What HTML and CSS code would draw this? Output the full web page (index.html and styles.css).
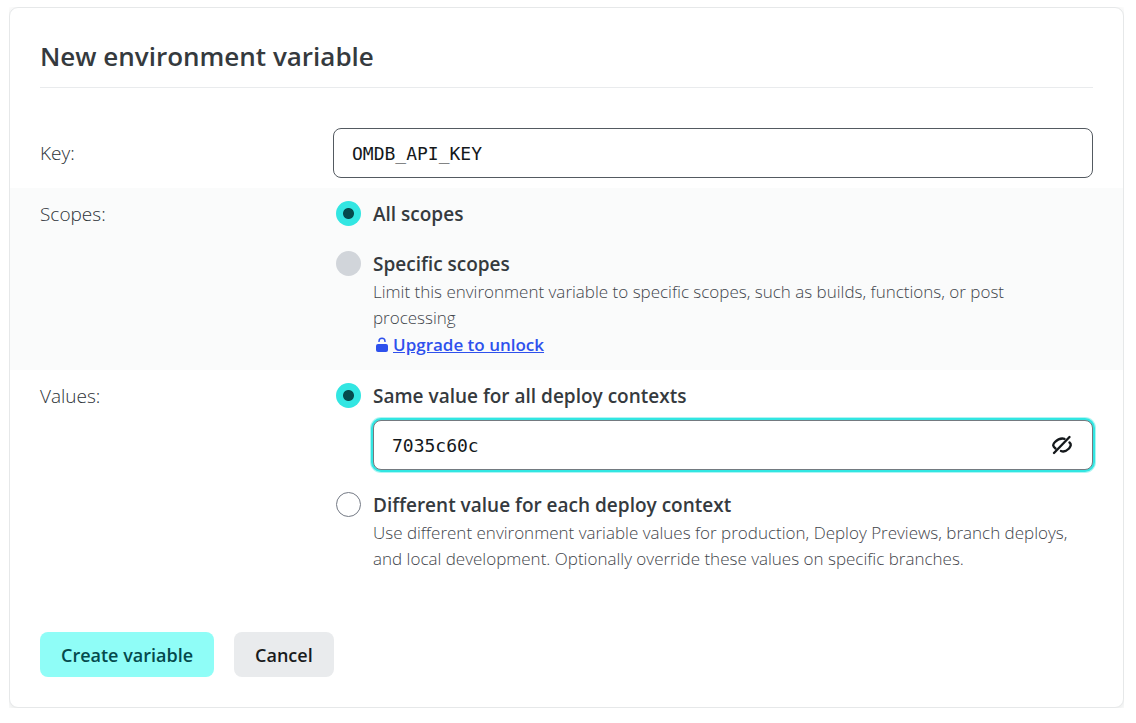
FILE: index.html
```html
<!DOCTYPE html>
<html lang="en">
<head>
  <meta charset="utf-8">
  <meta name="viewport" content="width=device-width, initial-scale=1.0">
  <title>New environment variable</title>
  <link rel="stylesheet" href="styles.css">
</head>
<body>
  <main class="card">
    <h1>New environment variable</h1>
    <form>
      <div class="row row-key">
        <label for="key">Key:</label>
        <input class="text-input" id="key" type="text" value="OMDB_API_KEY">
      </div>

      <div class="row row-shaded" role="radiogroup" aria-labelledby="scopes-label">
        <span class="row-label" id="scopes-label">Scopes:</span>
        <div class="options">
          <div class="option">
            <input type="radio" id="scope-all" name="scope" checked>
            <div class="option-body">
              <label class="option-title" for="scope-all">All scopes</label>
            </div>
          </div>
          <div class="option">
            <input type="radio" id="scope-specific" name="scope" disabled>
            <div class="option-body">
              <label class="option-title" for="scope-specific">Specific scopes</label>
              <p class="help">Limit this environment variable to specific scopes, such as builds, functions, or post processing</p>
              <div class="upgrade">
                <svg class="lock" width="14" height="16" viewBox="0 0 14 16" aria-hidden="true">
                  <path d="M4 5V4.300a3 3 0 0 1 6 0V5" fill="none" stroke="currentColor" stroke-width="1.400"/>
                  <rect x="1" y="7" width="12" height="8" rx="2" fill="currentColor"/>
                </svg>
                <a href="#">Upgrade to unlock</a>
              </div>
            </div>
          </div>
        </div>
      </div>

      <div class="row" role="radiogroup" aria-labelledby="values-label">
        <span class="row-label" id="values-label">Values:</span>
        <div class="options">
          <div class="option">
            <input type="radio" id="value-same" name="value" checked>
            <div class="option-body">
              <label class="option-title" for="value-same">Same value for all deploy contexts</label>
              <div class="secret">
                <input class="text-input focused" type="text" value="7035c60c" aria-label="Value">
                <button class="toggle" type="button" aria-label="Hide value">
                  <svg width="22" height="22" viewBox="0 0 22 22" fill="none" stroke="currentColor" stroke-width="2.4" stroke-linecap="round" aria-hidden="true">
                    <path d="M4.500 14.500C1.500 12 1.500 10.500 4 8C7 5 10 4 13.500 4.800"/>
                    <path d="M18.500 8.500C20.500 10 20 12 18 14.500C15.500 17 12.500 18 10 17"/>
                    <path d="M3 19L18.500 3"/>
                  </svg>
                </button>
              </div>
            </div>
          </div>
          <div class="option">
            <input type="radio" id="value-different" name="value">
            <div class="option-body">
              <label class="option-title" for="value-different">Different value for each deploy context</label>
              <p class="help">Use different environment variable values for production, Deploy Previews, branch deploys, and local development. Optionally override these values on specific branches.</p>
            </div>
          </div>
        </div>
      </div>

      <div class="actions">
        <button class="btn btn-primary" type="submit">Create variable</button>
        <button class="btn" type="button">Cancel</button>
      </div>
    </form>
  </main>
</body>
</html>
```

FILE: styles.css
```css
* {
  box-sizing: border-box;
}

body {
  margin: 7px 12px 14px 9px;
  background: #fff;
  color: #353a3e;
  font-family: "Open Sans", "Noto Sans", sans-serif;
  font-size: 19px;
  line-height: 30px;
}

.card {
  padding-bottom: 30px;
  border: 1px solid #e6e8e9;
  border-radius: 9px;
  background: #fff;
  box-shadow: 0 2px 10px rgba(14, 30, 37, 0.12);
}

h1 {
  margin: 0 30px;
  padding: 28px 0 11px;
  border-bottom: 1px solid #e9ebed;
  font-size: 26px;
  font-weight: 600;
  line-height: 40px;
}

.row {
  display: grid;
  grid-template-columns: 293px 1fr;
  padding: 11px 30px;
}

.row-key {
  align-items: center;
  padding: 40px 30px 10px;
}

.row-shaded {
  background: #fafbfb;
}

.row-key label,
.row-label {
  color: #2c3237;
  font-weight: 300;
}

.text-input {
  width: 100%;
  height: 50px;
  padding: 0 18px;
  border: 1px solid #545a61;
  border-radius: 8px;
  background: #fff;
  color: #14181b;
  font-family: "DejaVu Sans Mono", monospace;
  font-size: 18px;
}

.text-input:focus {
  outline: none;
}

.text-input.focused {
  padding-right: 60px;
  border-color: #747a80;
  box-shadow: 0 0 0 2px #32e6e2, 0 0 0 3px rgba(50, 230, 226, 0.4);
}

.options {
  display: flex;
  flex-direction: column;
  gap: 20px;
  padding-left: 3px;
}

.option {
  display: flex;
  gap: 12px;
}

.option-body {
  flex: 1;
}

.option-title {
  display: block;
  font-weight: 600;
}

input[type="radio"] {
  appearance: none;
  flex: none;
  width: 25px;
  height: 25px;
  margin: 2px 0;
  border: 1px solid #747a85;
  border-radius: 50%;
  background: #fff;
}

input[type="radio"]:checked {
  border: none;
  background: radial-gradient(circle, #054a4c 0 5px, #32e6e2 6px);
}

input[type="radio"]:disabled {
  border: none;
  background: #d1d5da;
}

.help {
  margin: 0;
  padding-right: 10px;
  color: #3f454b;
  font-size: 17px;
  font-weight: 300;
  line-height: 26px;
}

.upgrade {
  display: flex;
  align-items: center;
  gap: 4px;
  padding-left: 2px;
  color: #2e51ed;
  font-size: 17px;
  font-weight: 600;
  line-height: 28px;
}

.upgrade a {
  color: inherit;
}

.secret {
  position: relative;
  margin-top: 9px;
}

.toggle {
  position: absolute;
  top: 14px;
  right: 20px;
  width: 22px;
  height: 22px;
  padding: 0;
  border: none;
  background: none;
  color: #14181b;
  cursor: pointer;
}

.toggle svg {
  display: block;
}

.actions {
  display: flex;
  gap: 20px;
  padding: 49px 30px 0;
}

.btn {
  height: 45px;
  padding: 0 21px;
  border: none;
  border-radius: 8px;
  background: #e9ebed;
  color: #181a1c;
  font-family: inherit;
  font-size: 18px;
  font-weight: 600;
  cursor: pointer;
}

.btn-primary {
  background: #8ffdf7;
  color: #044a4c;
}
```
